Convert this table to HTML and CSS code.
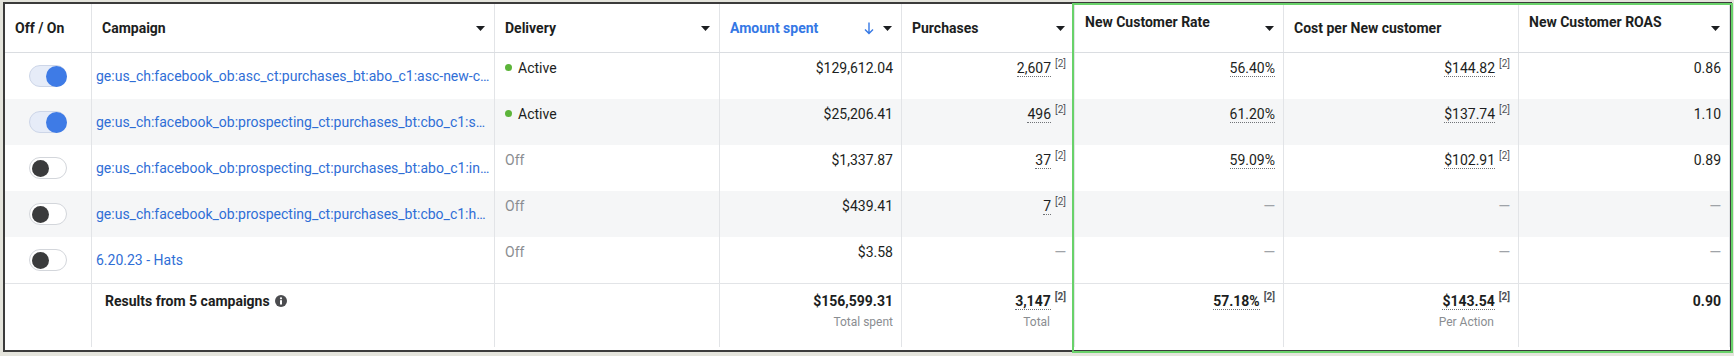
FILE: index.html
```html
<!DOCTYPE html>
<html lang="en">
<head>
<meta charset="utf-8">
<title>Campaigns</title>
<link rel="stylesheet" href="styles.css">
</head>
<body>
<div class="frame">
  <div class="table">
    <div class="row head">
      <div class="cell hcell"><span class="htext">Off / On</span></div>
      <div class="cell hcell"><span class="htext">Campaign</span><svg class="caret" viewBox="0 0 9 5"><path d="M0 0h9L4.5 5z"/></svg></div>
      <div class="cell hcell"><span class="htext">Delivery</span><svg class="caret" viewBox="0 0 9 5"><path d="M0 0h9L4.5 5z"/></svg></div>
      <div class="cell hcell"><span class="htext sorted">Amount spent</span><span class="hicons"><svg class="sort" viewBox="0 0 10 13"><path d="M5 0.5v11M1 7.5l4 4 4-4"/></svg><svg class="caret" viewBox="0 0 9 5"><path d="M0 0h9L4.5 5z"/></svg></span></div>
      <div class="cell hcell"><span class="htext">Purchases</span><svg class="caret" viewBox="0 0 9 5"><path d="M0 0h9L4.5 5z"/></svg></div>
      <div class="cell hcell top"><span class="htext">New Customer Rate</span><svg class="caret" viewBox="0 0 9 5"><path d="M0 0h9L4.5 5z"/></svg></div>
      <div class="cell hcell"><span class="htext">Cost per New customer</span></div>
      <div class="cell hcell top"><span class="htext">New Customer ROAS</span><svg class="caret" viewBox="0 0 9 5"><path d="M0 0h9L4.5 5z"/></svg></div>
    </div>

    <div class="row">
      <div class="cell tcell"><span class="toggle on"><span class="knob"></span></span></div>
      <div class="cell ncell"><a class="link" href="#">ge:us_ch:facebook_ob:asc_ct:purchases_bt:abo_c1:asc-new-c…</a></div>
      <div class="cell dcell"><span class="dot"></span>Active</div>
      <div class="cell num">$129,612.04</div>
      <div class="cell num"><span class="u">2,607</span><sup class="fn">[2]</sup></div>
      <div class="cell num"><span class="u">56.40%</span></div>
      <div class="cell num"><span class="u">$144.82</span><sup class="fn">[2]</sup></div>
      <div class="cell num">0.86</div>
    </div>

    <div class="row alt">
      <div class="cell tcell"><span class="toggle on"><span class="knob"></span></span></div>
      <div class="cell ncell"><a class="link" href="#">ge:us_ch:facebook_ob:prospecting_ct:purchases_bt:cbo_c1:s…</a></div>
      <div class="cell dcell"><span class="dot"></span>Active</div>
      <div class="cell num">$25,206.41</div>
      <div class="cell num"><span class="u">496</span><sup class="fn">[2]</sup></div>
      <div class="cell num"><span class="u">61.20%</span></div>
      <div class="cell num"><span class="u">$137.74</span><sup class="fn">[2]</sup></div>
      <div class="cell num">1.10</div>
    </div>

    <div class="row">
      <div class="cell tcell"><span class="toggle"><span class="knob"></span></span></div>
      <div class="cell ncell"><a class="link" href="#">ge:us_ch:facebook_ob:prospecting_ct:purchases_bt:abo_c1:in…</a></div>
      <div class="cell dcell off">Off</div>
      <div class="cell num">$1,337.87</div>
      <div class="cell num"><span class="u">37</span><sup class="fn">[2]</sup></div>
      <div class="cell num"><span class="u">59.09%</span></div>
      <div class="cell num"><span class="u">$102.91</span><sup class="fn">[2]</sup></div>
      <div class="cell num">0.89</div>
    </div>

    <div class="row alt">
      <div class="cell tcell"><span class="toggle"><span class="knob"></span></span></div>
      <div class="cell ncell"><a class="link" href="#">ge:us_ch:facebook_ob:prospecting_ct:purchases_bt:cbo_c1:h…</a></div>
      <div class="cell dcell off">Off</div>
      <div class="cell num">$439.41</div>
      <div class="cell num"><span class="u">7</span><sup class="fn">[2]</sup></div>
      <div class="cell num"><span class="dash">—</span></div>
      <div class="cell num"><span class="dash">—</span></div>
      <div class="cell num"><span class="dash">—</span></div>
    </div>

    <div class="row">
      <div class="cell tcell"><span class="toggle"><span class="knob"></span></span></div>
      <div class="cell ncell"><a class="link" href="#">6.20.23 - Hats</a></div>
      <div class="cell dcell off">Off</div>
      <div class="cell num">$3.58</div>
      <div class="cell num"><span class="dash">—</span></div>
      <div class="cell num"><span class="dash">—</span></div>
      <div class="cell num"><span class="dash">—</span></div>
      <div class="cell num"><span class="dash">—</span></div>
    </div>

    <div class="row foot">
      <div class="cell"></div>
      <div class="cell fname">Results from 5 campaigns <svg class="info" viewBox="0 0 12 12"><circle cx="6" cy="6" r="6"/><circle class="ii" cx="6" cy="3.3" r="1.1"/><rect class="ii" x="5" y="5" width="2" height="4.6" rx="0.4"/></svg></div>
      <div class="cell"></div>
      <div class="cell fnum"><div class="fval">$156,599.31</div><div class="sub">Total spent</div></div>
      <div class="cell fnum"><div class="fval"><span class="u">3,147</span><sup class="fn">[2]</sup></div><div class="sub pad">Total</div></div>
      <div class="cell fnum"><div class="fval"><span class="u">57.18%</span><sup class="fn">[2]</sup></div></div>
      <div class="cell fnum"><div class="fval"><span class="u">$143.54</span><sup class="fn">[2]</sup></div><div class="sub pad">Per Action</div></div>
      <div class="cell fnum"><div class="fval">0.90</div></div>
    </div>
  </div>
  <div class="highlight"></div>
</div>
</body>
</html>
```

FILE: styles.css
```css
* { box-sizing: border-box; }
html, body { margin: 0; }
body {
  width: 1734px;
  height: 356px;
  overflow: hidden;
  padding: 2px 0 0 3px;
  background: #e4e4dc;
  font-family: Roboto, "Liberation Sans", sans-serif;
  font-size: 14px;
  color: #1c1e21;
}
.frame {
  position: relative;
  width: 1729px;
  height: 350px;
  border: 2px solid #3b3b3b;
  background: #fff;
}
.table { display: flex; flex-direction: column; }
.row {
  display: grid;
  grid-template-columns: 87px 403px 225px 182px 173px 209px 235px 211px;
  height: 46px;
}
.row.alt { background: #f5f6f7; }
.cell {
  border-right: 1px solid #e2e4e7;
  min-width: 0;
  line-height: 18px;
}
/* header */
.row.head { height: 49px; border-bottom: 1px solid #dadde1; }
.hcell {
  display: flex;
  align-items: center;
  justify-content: space-between;
  padding: 0 9px 0 10px;
  font-weight: 700;
}
.hcell.top .htext { align-self: flex-start; margin-top: 9px; }
.htext.sorted { color: #3578e5; }
.hicons { display: flex; align-items: center; gap: 9px; }
.caret { width: 9px; height: 5px; fill: #1c1e21; flex: none; }
.sort { width: 10px; height: 13px; fill: none; stroke: #3578e5; stroke-width: 1.4; }
/* body cells */
.tcell { display: flex; align-items: center; justify-content: center; }
.toggle {
  display: flex;
  align-items: center;
  width: 38px;
  height: 22px;
  padding: 0 2px;
  border: 1px solid #d3d6db;
  border-radius: 11px;
  background: #fff;
}
.toggle .knob {
  width: 17px;
  height: 17px;
  border-radius: 50%;
  background: #3a3b3c;
}
.toggle.on {
  justify-content: flex-end;
  padding: 0;
  background: #e6ecf8;
  border-color: #cdd6e8;
}
.toggle.on .knob { width: 21px; height: 21px; margin-right: -1px; background: #3e7be6; }
.ncell {
  display: flex;
  align-items: center;
  padding: 0 2px 0 4px;
}
.link {
  color: #2f6ed6;
  text-decoration: none;
  white-space: nowrap;
}
.dcell { padding: 6px 8px 0 10px; display: flex; align-items: flex-start; }
.dcell.off { color: #8a8d91; }
.dot {
  width: 7px; height: 7px; border-radius: 50%;
  background: #5cb43a;
  margin: 5px 6px 0 0;
  flex: none;
}
.num { text-align: right; padding: 6px 8px 0 8px; white-space: nowrap; }
.u { border-bottom: 1px dotted #707377; }
.fn {
  font-size: 10px;
  line-height: 9px;
  color: #505358;
  margin-left: 4px;
  vertical-align: 6px;
}
.dash { color: #9fa3a8; font-size: 15px; font-weight: 500; }
/* footer */
.row.foot { height: 64px; border-top: 1px solid #e2e4e7; }
.fname {
  padding: 8px 8px 0 13px;
  font-weight: 700;
  display: flex;
  align-items: flex-start;
  gap: 5px;
}
.info { width: 12px; height: 12px; margin-top: 3px; fill: #4b4c4f; flex: none; }
.info .ii { fill: #fff; }
.fnum { text-align: right; padding: 8px 8px 0 8px; white-space: nowrap; }
.fval { font-weight: 700; }
.sub { font-size: 12px; color: #8a8d91; margin-top: 3px; }
.sub.pad { padding-right: 16px; }
.highlight {
  position: absolute;
  left: 1067px;
  top: -1px;
  width: 661px;
  height: 350px;
  border: 2px solid #69d26a;
  pointer-events: none;
}
```
